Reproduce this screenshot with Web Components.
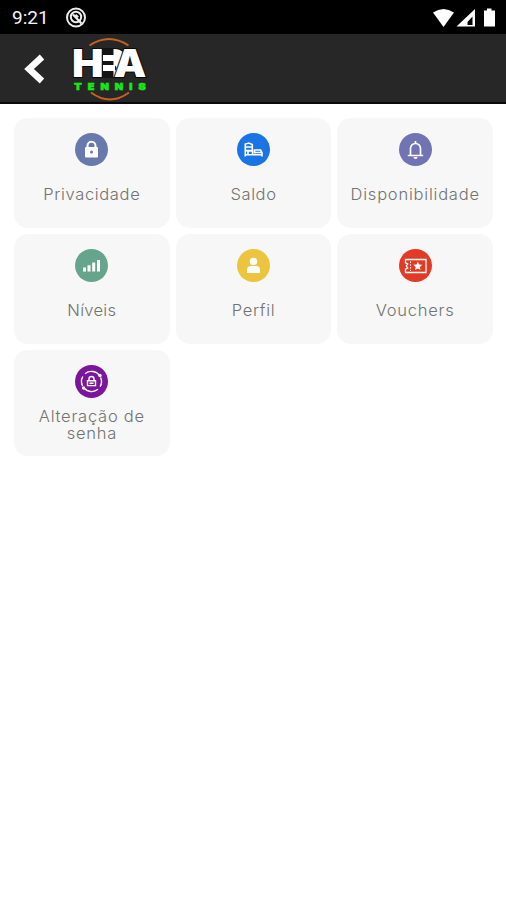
<!DOCTYPE html>
<html lang="pt-BR">
<head>
<meta charset="UTF-8">
<meta name="viewport" content="width=device-width, initial-scale=1.0">
<title>HBA Tennis</title>
<style>
    body{
        margin: 0;
        background: #fff;
        font-family: Inter, "Liberation Sans", sans-serif;
    }
</style>
</head>
<body>
<status-bar></status-bar>
<app-header></app-header>
<menu-grid>
    <menu-card icon="lock" color="#6879ad" spacing="0.65px">Privacidade</menu-card>
    <menu-card icon="bed" color="#1b74e4" spacing="0.6px">Saldo</menu-card>
    <menu-card icon="bell" color="#7074b3" spacing="0.78px">Disponibilidade</menu-card>
    <menu-card icon="bars" color="#66a48e" spacing="0.3px">Níveis</menu-card>
    <menu-card icon="user" color="#ecc440" spacing="0.7px">Perfil</menu-card>
    <menu-card icon="ticket" color="#e23b25" spacing="0.75px">Vouchers</menu-card>
    <menu-card icon="reset" color="#7b169c" spacing="0.75px" wrap>Alteração de senha</menu-card>
</menu-grid>

<script>
const icons = {
    lock: `<path d="M12.5 15v-2.2a4 4 0 0 1 8 0V15" fill="none" stroke="#fff" stroke-width="2"/>
        <rect x="10" y="14" width="13" height="10.5" rx="1" fill="#fff"/><circle cx="16.5" cy="19" r="1.5" fill="#6879ad"/>`,
    bed: `<g fill="none" stroke="#fff" stroke-width="1.6"><path d="M8.3 23.5V11l3.5-1 3.5 1.5V17M8.3 14h7M8.3 17.6h8M8.3 21.8h17M17.5 20.5V17h6l1.5 2.5v4M11 21.5V18h4.5v3.5M18 19.5h6"/></g>`,
    bell: `<g fill="none" stroke="#fff" stroke-width="1.7"><path d="M11.5 22v-6.5a5 5 0 0 1 10 0V22"/><path d="M8.8 22.5h15.4M16.5 8v2.5"/></g>
        <path d="M14.5 24h4a2 2 0 0 1-4 0z" fill="#fff"/>`,
    bars: `<path d="M8 18.5h3v4H8zM12.5 16.2h3v6.3h-3zM17.2 13.5h3v9h-3zM22 11h3v11.5h-3z" fill="#fff"/>`,
    user: `<circle cx="16.5" cy="12.5" r="3.7" fill="#fff"/><path d="M10 24v-3.2q0-3.8 4-3.8h5q4 0 4 3.8V24z" fill="#fff"/>`,
    ticket: `<path d="M6.5 10.5H27v13H6.5v-3.3l2.2-1.2-1.4-2 1.4-2-2.2-1.2z" fill="none" stroke="#fff" stroke-width="1.3"/>
        <path d="M11.5 12.5v9.5" stroke="#fff" stroke-width="1" stroke-dasharray="1.5 1.3"/>
        <path d="M18.8 12.6l1.3 2.9 3.1.3-2.3 2.1.6 3.1-2.7-1.6-2.7 1.6.6-3.1-2.3-2.1 3.1-.3z" fill="#fff"/>`,
    reset: `<g fill="none" stroke="#fff" stroke-width="1.4"><path d="M10 8.7a10 10 0 0 1 14.8 2.3M7.6 21a10 10 0 0 1 .2-9.500M23 24.3a10 10 0 0 1-14.2-1.5M25.6 12.5a10 10 0 0 1-.5 9.2"/>
        <path d="M14 15.5V14a2.5 2.5 0 0 1 5 0v1.5M12.5 15.8h8v4.8h-8zM14.5 18.2h4"/></g>
        <circle cx="25" cy="10.5" r="1.7" fill="#fff"/><circle cx="8.5" cy="23" r="1.7" fill="#fff"/>`
};

class StatusBar extends HTMLElement{
    constructor(){
        super();
        const shadow = this.attachShadow({ mode: "open" });
        shadow.innerHTML = `
        <style>
        :host{
            display: flex;
            align-items: center;
            height: 34px;
            box-sizing: border-box;
            padding: 2px 9px 0 12px;
            background: #000;
            color: #f5f5f5;
            font: 19px/32px Roboto, sans-serif;
        }
        svg{
            display: block;
        }
        .app{
            margin-left: 16px;
            margin-right: auto;
        }
        </style>
        <span>9:21</span>
        <svg class="app" width="22" height="22" viewBox="0 0 22 22" fill="none" stroke="#eee">
            <circle cx="11" cy="10.5" r="9" stroke-width="2"/>
            <circle cx="11" cy="10" r="5.2" stroke-width="2"/>
            <path d="M8 7.5l8.5 9" stroke-width="2.2"/>
            <path d="M10.5 7.8l2.7 2.5" stroke-width="2"/>
        </svg>
        <svg width="64" height="22" viewBox="0 0 64 22" fill="#fff">
            <path d="M0 5.5Q10.5 -1.5 21 5.5L10.5 20z"/>
            <path fill-rule="evenodd" d="M42 2v17.5H23.500zM39.5 9.5L34.5 15v3h5z"/>
            <path d="M54 1.5h4.5v2H62v16H51v-16h3z"/>
        </svg>
        `;
    }
}

class AppHeader extends HTMLElement{
    constructor(){
        super();
        const shadow = this.attachShadow({ mode: "open" });
        shadow.innerHTML = `
        <style>
        :host{
            display: flex;
            align-items: center;
            height: 70px;
            box-sizing: border-box;
            padding-left: 22px;
            background: #272727;
            border-bottom: 2px solid #090909;
        }
        button{
            display: flex;
            padding: 0;
            border: 0;
            background: none;
            cursor: pointer;
        }
        .logo{
            margin-left: 25px;
            font-family: Inter, sans-serif;
            font-weight: 900;
        }
        </style>
        <button aria-label="Voltar">
            <svg width="24" height="32" viewBox="0 0 24 32"><path d="M20 5L7 17l13 12" fill="none" stroke="#fff" stroke-width="6.5"/></svg>
        </button>
        <svg class="logo" width="78" height="68" viewBox="0 0 78 68">
            <g fill="none" stroke="#c9601f" stroke-width="2">
                <path d="M18.5 11.5Q38 -1.5 57.5 11.5"/>
                <path d="M20 58.5Q39 72.5 58 58.5"/>
            </g>
            <text transform="scale(1.08 1)" x="1 25.5 39.5" y="43" font-size="38" fill="#fff" stroke="#080808" stroke-width="2" paint-order="stroke">HBA</text>
            <!-- the B is open: two bars run from the stem of the H to its bowls -->
            <path d="M30.5 14h12v30h-12zM26 14h5v1h-5z" fill="#141414"/>
            <path d="M24 15h6.5v28H24z" fill="#fff"/>
            <path d="M32 21h13.5v6H32zM32 31h12v6H32z" fill="#fff"/>
            <text transform="scale(1.2 1)" x="2.7" y="56" font-size="9" fill="#17e817" stroke="#17e817" stroke-width=".6" textLength="59.5">TENNIS</text>
        </svg>
        `;
    }
    connectedCallback(){
        this.shadowRoot.querySelector("button").addEventListener("click", ()=>{
            history.back();
        });
    }
}

class MenuGrid extends HTMLElement{
    constructor(){
        super();
        const shadow = this.attachShadow({ mode: "open" });
        shadow.innerHTML = `
        <style>
        :host{
            display: grid;
            grid-template-columns: repeat(3, 1fr);
            grid-template-rows: 110px 110px 106px;
            gap: 6px;
            padding: 14px 13px 0 14px;
        }
        </style>
        <slot></slot>
        `;
    }
}

class MenuCard extends HTMLElement{
    constructor(){
        super();
        const shadow = this.attachShadow({ mode: "open" });
        shadow.innerHTML = `
        <style>
        :host{
            display: flex;
            flex-direction: column;
            align-items: center;
            box-sizing: border-box;
            padding-top: 15px;
            border-radius: 14px;
            background: #f7f7f7;
            cursor: pointer;
        }
        svg{
            display: block;
            flex: none;
        }
        .label{
            margin-top: 20px;
            color: #727272;
            font-size: 16.5px;
            font-weight: 300;
            line-height: 17px;
            text-align: center;
            letter-spacing: ${this.getAttribute("spacing")};
        }
        :host([wrap]) .label{
            width: 124px;
            margin-top: 10px;
        }
        </style>
        <svg width="33" height="33" viewBox="0 0 33 33">
            <circle cx="16.5" cy="16.5" r="16.5" fill="${this.getAttribute("color")}"/>
            ${icons[this.getAttribute("icon")]}
        </svg>
        <div class="label"><slot></slot></div>
        `;
    }
}

customElements.define("status-bar", StatusBar);
customElements.define("app-header", AppHeader);
customElements.define("menu-grid", MenuGrid);
customElements.define("menu-card", MenuCard);
</script>
</body>
</html>
